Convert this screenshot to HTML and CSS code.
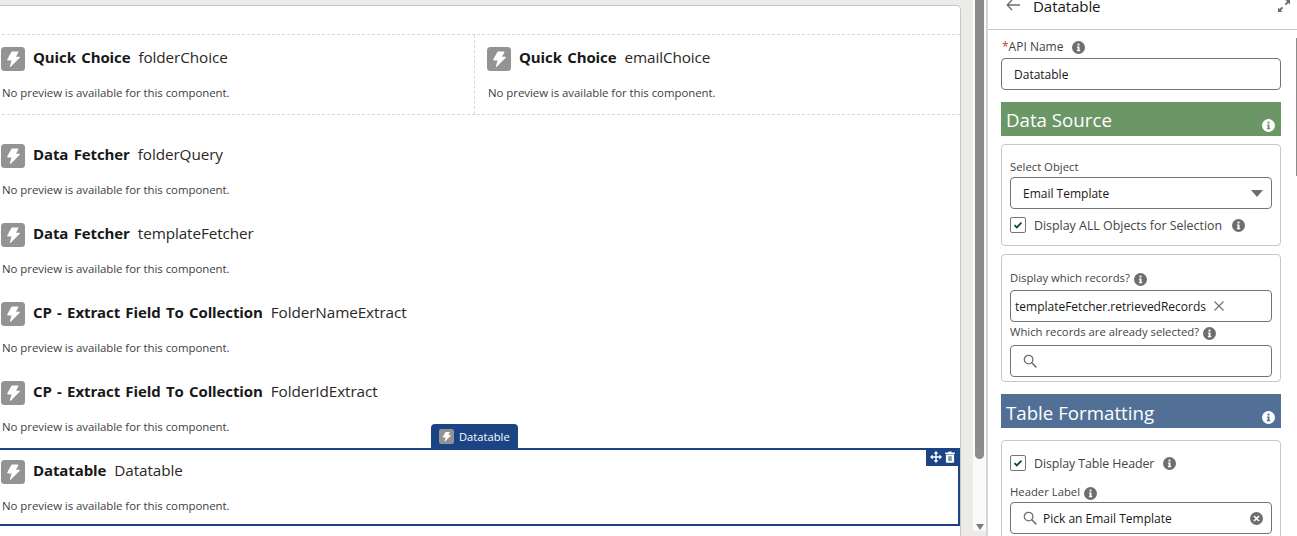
FILE: index.html
```html
<!DOCTYPE html>
<html lang="en">
<head>
<meta charset="utf-8">
<title>Screen Builder</title>
<link rel="stylesheet" href="styles.css">
</head>
<body>
<svg class="defs" width="0" height="0" aria-hidden="true">
  <symbol id="bolt" viewBox="0 0 24 24">
    <rect width="24" height="24" rx="3.5" fill="#939393"/>
    <path d="M11.2 4.600h5.600c.5 0 .7.4.5.8l-2.300 4.300h3.300c.5 0 .8.6.4 1L10 19.600c-.6.6-1.300.1-1.100-.6l1.700-5.600H6.900c-.5 0-.8-.4-.7-.9l4-7.200c.2-.4.6-.7 1-.7z" fill="#fff"/>
  </symbol>
  <symbol id="info" viewBox="0 0 13 13">
    <circle cx="6.500" cy="6.500" r="6.500" fill="currentColor"/>
    <rect x="5.500" y="2.600" width="2" height="1.900" rx=".6" fill="var(--glyph,#fff)"/>
    <path d="M4.900 5.400h2.600v3.600h.7v1.200H4.900V9h.7V6.600h-.7z" fill="var(--glyph,#fff)"/>
  </symbol>
  <symbol id="search" viewBox="0 0 14 14">
    <circle cx="5.600" cy="5.600" r="4.300" fill="none" stroke="#706e6b" stroke-width="1.300"/>
    <path d="M8.800 8.800l4.100 4.100" stroke="#706e6b" stroke-width="1.500" stroke-linecap="round"/>
  </symbol>
  <symbol id="check" viewBox="0 0 16 16">
    <path d="M4 8.200l2.600 2.600L12 5.400" fill="none" stroke="#0b4a3a" stroke-width="2"/>
  </symbol>
</svg>

<div class="app">
  <main class="stage">
    <div class="canvas">
      <div class="canvas-top"></div>
      <section class="choices">
        <div class="item">
          <div class="item-head"><svg class="bolt"><use href="#bolt"/></svg><b class="type">Quick Choice</b><span class="name">folderChoice</span></div>
          <p class="preview">No preview is available for this component.</p>
        </div>
        <div class="item item-split">
          <div class="item-head"><svg class="bolt"><use href="#bolt"/></svg><b class="type">Quick Choice</b><span class="name">emailChoice</span></div>
          <p class="preview">No preview is available for this component.</p>
        </div>
      </section>
      <div class="list">
        <div class="item">
          <div class="item-head"><svg class="bolt"><use href="#bolt"/></svg><b class="type">Data Fetcher</b><span class="name">folderQuery</span></div>
          <p class="preview">No preview is available for this component.</p>
        </div>
        <div class="item">
          <div class="item-head"><svg class="bolt"><use href="#bolt"/></svg><b class="type">Data Fetcher</b><span class="name">templateFetcher</span></div>
          <p class="preview">No preview is available for this component.</p>
        </div>
        <div class="item">
          <div class="item-head"><svg class="bolt"><use href="#bolt"/></svg><b class="type">CP - Extract Field To Collection</b><span class="name">FolderNameExtract</span></div>
          <p class="preview">No preview is available for this component.</p>
        </div>
        <div class="item">
          <div class="item-head"><svg class="bolt"><use href="#bolt"/></svg><b class="type">CP - Extract Field To Collection</b><span class="name">FolderIdExtract</span></div>
          <p class="preview">No preview is available for this component.</p>
        </div>
        <div class="item item-selected">
          <div class="tab"><svg class="bolt-small"><use href="#bolt"/></svg>Datatable</div>
          <div class="actions">
            <svg class="action" viewBox="0 0 12 12"><path d="M6 0l2.400 2.700H6.700v2.600h2.600V3.600L12 6 9.300 8.400V6.700H6.700v2.600h1.700L6 12 3.600 9.300h1.700V6.700H2.700v1.700L0 6l2.700-2.400v1.700h2.600V2.700H3.600z" fill="#fff"/></svg>
            <svg class="action" viewBox="0 0 12 12"><path d="M4.500.6h3v1h3.300v1.300H1.200V1.600h3.300zM1.900 3.600h8.200V11c0 .5-.3.8-.8.8H2.700c-.5 0-.8-.3-.8-.8z" fill="#fff"/><path d="M4.200 5.200h3.600v4.800H4.200z" fill="#7f97bd"/></svg>
          </div>
          <div class="item-head"><svg class="bolt"><use href="#bolt"/></svg><b class="type">Datatable</b><span class="name">Datatable</span></div>
          <p class="preview">No preview is available for this component.</p>
        </div>
      </div>
    </div>
    <div class="gutter"></div>
    <div class="scrollbar">
      <div class="thumb"></div>
      <div class="arrow"></div>
    </div>
  </main>

  <aside class="panel">
    <header class="panel-head">
      <svg class="back" viewBox="0 0 14 12"><path d="M6 1L1.200 6 6 11M1.500 6H14" fill="none" stroke="#706e6b" stroke-width="1.300"/></svg>
      <span class="panel-title">Datatable</span>
      <svg class="expand" viewBox="0 0 14 14"><path d="M8.500 1H13v4.500l-1.600-1.600-2.300 2.300-1.300-1.300 2.300-2.300zM5.500 13H1V8.500l1.600 1.600 2.300-2.300 1.300 1.300-2.300 2.300z" fill="#706e6b"/></svg>
    </header>
    <div class="panel-body">
      <div class="label label-api"><span class="req">*</span>API Name<svg class="info info-api"><use href="#info"/></svg></div>
      <div class="input input-wide"><span class="value">Datatable</span></div>

      <h2 class="band band-green">Data Source<svg class="info band-info"><use href="#info"/></svg></h2>
      <div class="box box-source">
        <div class="label">Select Object</div>
        <div class="input input-select"><span class="value">Email Template</span><span class="caret"></span></div>
        <div class="check-row"><span class="checkbox"><svg><use href="#check"/></svg></span><span class="check-label">Display ALL Objects for Selection</span><svg class="info info-check"><use href="#info"/></svg></div>
      </div>

      <div class="box box-records">
        <div class="label">Display which records?<svg class="info info-inline"><use href="#info"/></svg></div>
        <div class="input input-pill"><span class="value">templateFetcher.retrievedRecords</span><svg class="remove" viewBox="0 0 10 10"><path d="M.5.5l9 9M9.500.5l-9 9" stroke="#706e6b" stroke-width="1.100"/></svg></div>
        <div class="label label-tight">Which records are already selected?<svg class="info info-inline"><use href="#info"/></svg></div>
        <div class="input input-search"><svg class="search"><use href="#search"/></svg></div>
      </div>

      <h2 class="band band-blue">Table Formatting<svg class="info band-info"><use href="#info"/></svg></h2>
      <div class="box box-format">
        <div class="check-row"><span class="checkbox"><svg><use href="#check"/></svg></span><span class="check-label">Display Table Header</span><svg class="info info-check"><use href="#info"/></svg></div>
        <div class="label label-header">Header Label<svg class="info info-inline"><use href="#info"/></svg></div>
        <div class="input input-search"><svg class="search"><use href="#search"/></svg><span class="value value-search">Pick an Email Template</span><svg class="clear" viewBox="0 0 14 14"><circle cx="7" cy="7" r="7" fill="#706e6b"/><path d="M4.300 4.300l5.400 5.400M9.700 4.300l-5.400 5.400" stroke="#fff" stroke-width="1.800"/></svg></div>
      </div>
    </div>
    <div class="panel-scroll"></div>
  </aside>
</div>
</body>
</html>
```

FILE: styles.css
```css
* { box-sizing: border-box; }

html, body {
  margin: 0;
  height: 100%;
  overflow: hidden;
}

body {
  background: #fff;
  color: #181818;
  font-family: "Open Sans", "Noto Sans", sans-serif;
}

.defs { position: absolute; }

.app {
  display: flex;
  height: 536px;
  overflow: hidden;
}

/* Left canvas */
.stage {
  display: flex;
  flex: 0 0 988px;
  background: #ecebea;
  padding-top: 5px;
  border-right: 2px solid #d6d6d6;
}

.canvas {
  flex: 0 0 965px;
  margin-left: -4px;
  height: 640px;
  background: #fff;
  border: 1px solid #c9c7c5;
  border-radius: 4px;
}

.canvas-top { height: 28px; }

.choices {
  display: grid;
  grid-template-columns: 477px 1fr;
  border-top: 1px dashed #d8d8d8;
  border-bottom: 1px dashed #d8d8d8;
  margin-bottom: 17px;
}

.item {
  position: relative;
  height: 79px;
  padding: 12px 0 0 4px;
}

.item-split {
  border-left: 1px dashed #d8d8d8;
  padding-left: 12px;
}

.item-head {
  display: flex;
  align-items: center;
  height: 24px;
}

.bolt {
  width: 24px;
  height: 24px;
  flex: none;
  margin-right: 8px;
}

.type {
  font-size: 15px;
  font-weight: 700;
  margin: 0 8px 5px 0;
  letter-spacing: -0.1px;
  word-spacing: 1.500px;
}

.name {
  font-size: 15.300px;
  margin-bottom: 5px;
  color: #2b2826;
  letter-spacing: -0.1px;
}

.preview {
  margin: 13px 0 0 1px;
  font-size: 11.450px;
  line-height: 18px;
  color: #3e3e3c;
  letter-spacing: -0.05px;
}

.item-selected {
  height: 78px;
  padding-top: 10px;
  border-top: 2px solid #1b4484;
  border-bottom: 2px solid #1b4484;
  border-right: 2px solid #1b4484;
}

.tab {
  position: absolute;
  left: 434px;
  bottom: 100%;
  margin-bottom: 2px;
  width: 87px;
  height: 24px;
  padding-left: 8px;
  display: flex;
  align-items: center;
  gap: 5px;
  font-size: 11.200px;
  color: #fff;
  background: #1b4484;
  border-radius: 4px 4px 0 0;
}

.bolt-small {
  width: 15px;
  height: 15px;
  flex: none;
}

.actions {
  position: absolute;
  right: -2px;
  top: -2px;
  width: 34px;
  height: 18px;
  display: flex;
  align-items: center;
  justify-content: center;
  gap: 2px;
  background: #1b4484;
}

.action {
  width: 12px;
  height: 12px;
}

.gutter { flex: 0 0 12px; }

.scrollbar {
  flex: 0 0 13px;
  height: 531px;
  margin-top: -5px;
  background: #fafafa;
  position: relative;
  display: flex;
  justify-content: center;
  padding-right: 1px;
}

.thumb {
  width: 9px;
  height: 459px;
  background: #8c8c8c;
  border-radius: 0 0 5px 5px;
}

.arrow {
  position: absolute;
  left: 3px;
  bottom: 1px;
  border-left: 4px solid transparent;
  border-right: 4px solid transparent;
  border-top: 6px solid #7d7d7d;
}

/* Right panel */
.panel {
  position: relative;
  flex: 1;
  min-width: 0;
  background: #fff;
}

.panel-head {
  display: flex;
  align-items: flex-start;
  height: 30px;
  border-bottom: 1px solid #c9c7c5;
  padding-left: 18px;
}

.back {
  width: 14px;
  height: 12px;
  flex: none;
  margin: -1px 13px 0 0;
}

.panel-title {
  font-size: 15.100px;
  line-height: 12px;
  letter-spacing: -0.1px;
}

.expand {
  width: 14px;
  height: 14px;
  margin-left: auto;
  margin-right: 6px;
  margin-top: -1px;
}

.panel-body {
  padding: 10px 16px 0 13px;
}

.label {
  display: flex;
  align-items: center;
  font-size: 11.300px;
  line-height: 14px;
  color: #444;
}

.label-api {
  font-size: 12px;
  height: 14px;
  margin-bottom: 4px;
  padding-left: 1px;
}

.req {
  color: #c23934;
}

.info {
  color: #706e6b;
  width: 13px;
  height: 13px;
  flex: none;
}

.info-api { margin-left: 9px; }
.info-check { margin-left: 10px; }
.info-inline { margin-left: 4px; margin-top: 3px; }

.input {
  display: flex;
  align-items: center;
  height: 32px;
  background: #fff;
  border: 1px solid #747474;
  border-radius: 4px;
}

.input-wide { padding-left: 12px; }

.value {
  font-size: 12px;
  color: #181818;
}

.band {
  position: relative;
  height: 34px;
  margin: 12px 0 8px;
  padding-left: 5px;
  font-size: 18.700px;
  font-weight: 400;
  line-height: 36px;
  color: #fff;
}

.band-green { background: #6b9665; }

.band-blue {
  background: #526f96;
  margin-bottom: 12px;
  line-height: 37px;
}

.band-info {
  position: absolute;
  right: 6px;
  bottom: 4px;
  color: #fff;
  --glyph: #6b9665;
}

.band-blue .band-info { --glyph: #526f96; }

.box {
  border: 1px solid #c9c7c5;
  border-radius: 4px;
  padding: 15px 8px 4px;
}

.box-source { height: 102px; margin-bottom: 8px; }
.box-records { height: 128px; }
.box-format { height: 110px; padding-top: 14px; }

.box-source .label { margin-bottom: 3px; }

.input-select {
  padding-left: 12px;
  justify-content: space-between;
  padding-right: 8px;
}

.caret {
  border-left: 6px solid transparent;
  border-right: 6px solid transparent;
  border-top: 7px solid #706e6b;
}

.check-row {
  display: flex;
  align-items: center;
  height: 16px;
  margin-top: 8px;
}

.box-format .check-row { margin-top: 0; }
.box-format .check-label { letter-spacing: -0.1px; }
.box-format .info-check { margin-left: 9px; }

.checkbox {
  width: 16px;
  height: 16px;
  border: 1px solid #747474;
  border-radius: 2px;
  margin-right: 8px;
  flex: none;
}

.checkbox svg {
  display: block;
  width: 14px;
  height: 14px;
}

.check-label {
  font-size: 12.400px;
  color: #444;
}

.box-records .label { margin-bottom: 4px; }
.box-records .label-tight { margin-top: 2px; margin-bottom: 5px; }

.input-pill { padding-left: 4px; }

.remove {
  width: 10px;
  height: 10px;
  margin-left: 8px;
}

.label-header { margin-top: 13px; margin-bottom: 2px; }

.input-search { padding-left: 12px; }

.search {
  width: 14px;
  height: 14px;
  flex: none;
}

.value-search { margin-left: 6px; }

.clear {
  width: 13px;
  height: 13px;
  margin-left: auto;
  margin-right: 8px;
}

.panel-scroll {
  position: absolute;
  right: 0;
  top: 38px;
  width: 1px;
  height: 138px;
  background: #8c8c8c;
}
```
